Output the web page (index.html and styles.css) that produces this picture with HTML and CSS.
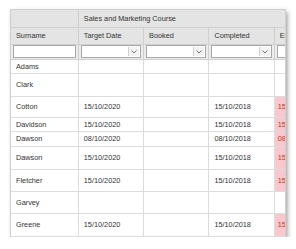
FILE: index.html
```html
<!DOCTYPE html>
<html lang="en">
<head>
    <meta charset="UTF-8">
    <meta name="viewport" content="width=device-width, initial-scale=1.0">
    <title>Training Matrix</title>
    <link rel="stylesheet" href="styles.css">
</head>
<body>
    <div class="wrap">
        <div class="card">
            <table class="grid">
                <colgroup>
                    <col class="c-name">
                    <col class="c-date">
                    <col class="c-date">
                    <col class="c-date">
                    <col class="c-extra">
                </colgroup>
                <thead>
                    <tr class="group-row">
                        <th></th>
                        <th colspan="4">Sales and Marketing Course</th>
                    </tr>
                    <tr class="head-row">
                        <th>Surname</th>
                        <th>Target Date</th>
                        <th>Booked</th>
                        <th>Completed</th>
                        <th>Expiry</th>
                    </tr>
                    <tr class="filter-row">
                        <th><div class="filter"></div></th>
                        <th><div class="filter select"><span class="drop"><svg width="6" height="4" viewBox="0 0 6 4"><path d="M0.5 0.5 L3 3 L5.5 0.5" fill="none" stroke="#666" stroke-width="0.9"/></svg></span></div></th>
                        <th><div class="filter select"><span class="drop"><svg width="6" height="4" viewBox="0 0 6 4"><path d="M0.5 0.5 L3 3 L5.5 0.5" fill="none" stroke="#666" stroke-width="0.9"/></svg></span></div></th>
                        <th><div class="filter select"><span class="drop"><svg width="6" height="4" viewBox="0 0 6 4"><path d="M0.5 0.5 L3 3 L5.5 0.5" fill="none" stroke="#666" stroke-width="0.9"/></svg></span></div></th>
                        <th><div class="filter select"><span class="drop"><svg width="6" height="4" viewBox="0 0 6 4"><path d="M0.5 0.5 L3 3 L5.5 0.5" fill="none" stroke="#666" stroke-width="0.9"/></svg></span></div></th>
                    </tr>
                </thead>
                <tbody>
                    <tr class="h14"><td>Adams</td><td></td><td></td><td></td><td></td></tr>
                    <tr class="h23"><td>Clark</td><td></td><td></td><td></td><td></td></tr>
                    <tr class="h21"><td>Cotton</td><td>15/10/2020</td><td></td><td>15/10/2018</td><td class="due">15/10/2020</td></tr>
                    <tr class="h14"><td>Davidson</td><td>15/10/2020</td><td></td><td>15/10/2018</td><td class="due">15/10/2020</td></tr>
                    <tr class="h15"><td>Dawson</td><td>08/10/2020</td><td></td><td>08/10/2018</td><td class="due">08/10/2020</td></tr>
                    <tr class="h23"><td>Dawson</td><td>15/10/2020</td><td></td><td>15/10/2018</td><td class="due">15/10/2020</td></tr>
                    <tr class="h22"><td>Fletcher</td><td>15/10/2020</td><td></td><td>15/10/2018</td><td class="due">15/10/2020</td></tr>
                    <tr class="h22"><td>Garvey</td><td></td><td></td><td></td><td></td></tr>
                    <tr class="h23"><td>Greene</td><td>15/10/2020</td><td></td><td>15/10/2018</td><td class="due">15/10/2020</td></tr>
                </tbody>
            </table>
        </div>
    </div>
</body>
</html>
```

FILE: styles.css
```css
* {
    margin: 0;
    padding: 0;
    box-sizing: border-box;
}

body {
    background: #fff;
    font-family: "Liberation Sans", Arial, sans-serif;
    font-size: 7.3px;
    color: #333;
    overflow: hidden;
}

.wrap {
    padding: 10px 0 0 11px;
}

.card {
    width: 274px;
    height: 227px;
    overflow: hidden;
    background: #fff;
    box-shadow: 0 0 0 1px #cfcfcf, 2px 2px 5px rgba(0, 0, 0, 0.45);
}

.grid {
    border-collapse: collapse;
    table-layout: fixed;
    width: 324px;
}

.c-name { width: 67px; }
.c-date { width: 65px; }
.c-extra { width: 60px; }

.grid th,
.grid td {
    border: 1px solid #dcdcdc;
    text-align: left;
    font-weight: normal;
    padding: 0 5px;
    white-space: nowrap;
    overflow: hidden;
}

.grid th {
    background: #e4e4e4;
    border-color: #d0d0d0;
}

.grid tr:first-child th { border-top: none; }
.grid th:first-child,
.grid td:first-child { border-left: none; }

.group-row th { height: 17px; }
.head-row th { height: 17px; }

.filter-row th {
    height: 15px;
    padding: 0 2px;
    background: #ececec;
}

.filter {
    height: 13px;
    background: #fff;
    border: 1px solid #a8a8a8;
    display: flex;
    justify-content: flex-end;
    align-items: stretch;
}

.drop {
    width: 11px;
    display: flex;
    align-items: center;
    justify-content: center;
    background: #f3f3f3;
    border-left: 1px solid #cfcfcf;
    margin: 1px;
}

.h14 td { height: 14px; }
.h15 td { height: 15px; }
.h21 td { height: 21px; }
.h22 td { height: 22px; }
.h23 td { height: 23px; }

.grid td.due {
    background: #fbc6cc;
    color: #c0392b;
    padding-left: 3px;
}
```
